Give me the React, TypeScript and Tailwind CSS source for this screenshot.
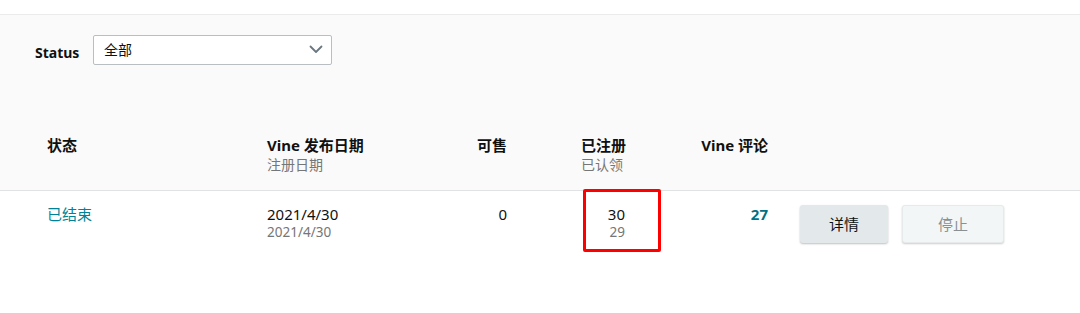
const font = { fontFamily: '"Noto Sans", "Noto Sans CJK SC", sans-serif' };

function Chevron() {
  return (
    <svg width="14" height="9" viewBox="0 0 14 9" fill="none">
      <path d="M1.5 1.5 L7 7 L12.5 1.5" stroke="#6b7780" strokeWidth="1.8" strokeLinecap="round" strokeLinejoin="round" />
    </svg>
  );
}

export default function App() {
  return (
    <div className="w-[1080px] h-[313px] bg-white text-[15px] text-[#0f1111] overflow-hidden" style={font}>
      <div className="h-[15px] bg-white border-b border-[#ebebeb]" />
      <div className="bg-[#fafafa] border-b border-[#dfe3e4]">
        <div className="flex items-center pl-[35px] pt-[19px] h-[50px]">
          <span className="font-bold text-[14px] pt-[6px] w-[58px]">Status</span>
          <div className="w-[239px] h-[30px] bg-white border border-[#b8bec2] rounded-[2px] flex items-center justify-between pl-[10px] pr-[8px]">
            <span className="text-[14px]">全部</span>
            <Chevron />
          </div>
        </div>
        <div className="grid grid-cols-[220px_160px_80px_119px_142px_1fr] pl-[47px] pt-[70px] pb-[15px] leading-[20px]">
          <div className="font-bold">状态</div>
          <div>
            <div className="font-bold">Vine 发布日期</div>
            <div className="text-[14px] text-[#767676]">注册日期</div>
          </div>
          <div className="font-bold text-right">可售</div>
          <div className="flex justify-end">
            <div>
              <div className="font-bold">已注册</div>
              <div className="text-[14px] text-[#767676]">已认领</div>
            </div>
          </div>
          <div className="font-bold text-right">Vine 评论</div>
          <div />
        </div>
      </div>
      <div className="grid grid-cols-[220px_160px_80px_119px_142px_1fr] pl-[47px] pt-[13px] leading-[20px]">
        <div className="text-[#008296]">已结束</div>
        <div>
          <div>2021/4/30</div>
          <div className="text-[13.5px] leading-[17px] text-[#767676]">2021/4/30</div>
        </div>
        <div className="text-right">0</div>
        <div className="relative flex justify-end pr-[1px]">
          <div className="text-right">
            <div>30</div>
            <div className="text-[13.5px] leading-[17px] text-[#767676]">29</div>
          </div>
          <div className="absolute left-[76px] top-[-15px] w-[78px] h-[63px] border-[3px] border-[#ff0000] rounded-[2px]" />
        </div>
        <div className="text-right font-bold text-[#007185]">27</div>
        <div className="flex gap-[14px] pl-[32px] pt-[1px]">
          <button className="w-[88px] h-[38px] rounded-[3px] bg-[#e3e9ea] text-[#0f1111] shadow-[0_1px_2px_rgba(0,0,0,0.25)]">详情</button>
          <button className="w-[102px] h-[38px] rounded-[3px] bg-[#f3f6f6] text-[#8a8f92] border border-[#e6eaeb] shadow-[0_1px_2px_rgba(0,0,0,0.2)]">停止</button>
        </div>
      </div>
    </div>
  );
}
